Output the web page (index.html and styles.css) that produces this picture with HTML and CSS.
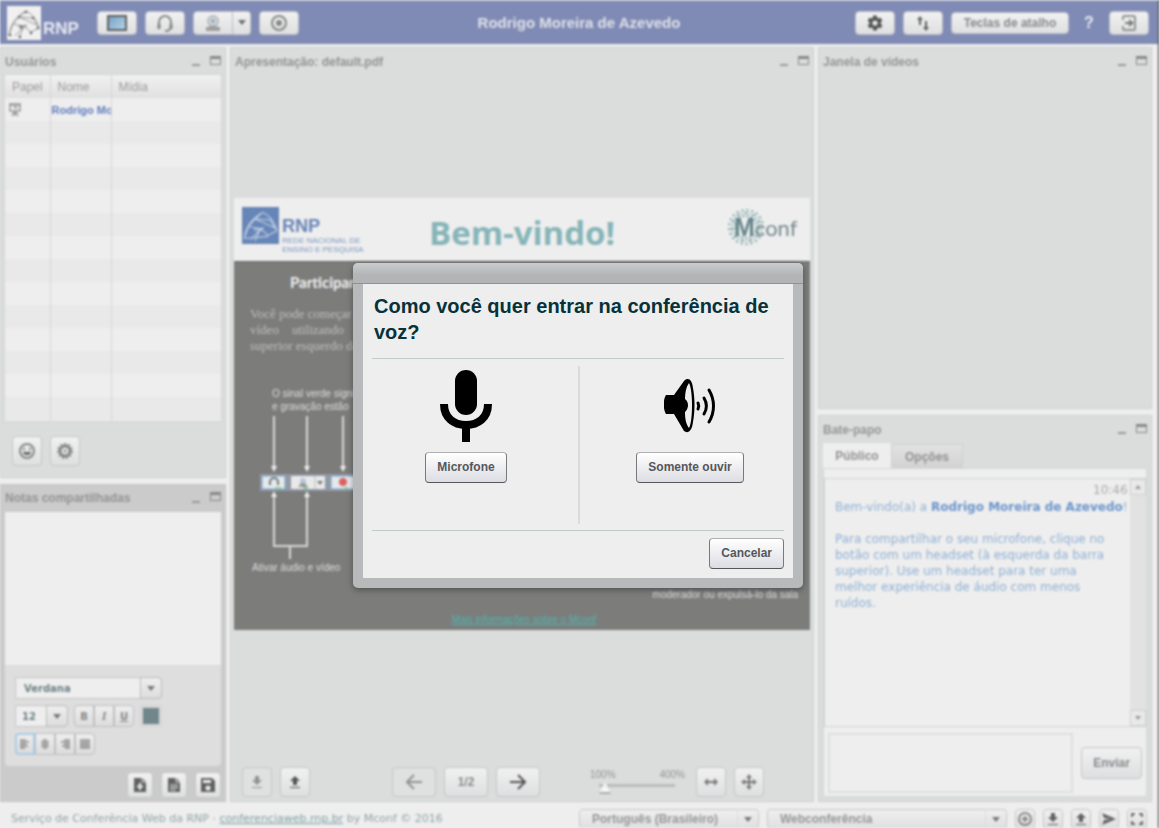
FILE: index.html
```html
<!DOCTYPE html>
<html lang="pt-BR">
<head>
<meta charset="utf-8">
<title>Webconferência</title>
<link rel="stylesheet" href="styles.css">
</head>
<body>
<div class="app">
  <header class="topbar">
    <div class="topbar-left">
      <div class="brand">
        <svg class="brand-mark" viewBox="0 0 34 34"><rect width="34" height="34" fill="#f0f0f0"/><g fill="none" stroke="#999" stroke-width="1"><path d="M2 29C3 20 8 11 19 5C26 8 31 16 32 22L24 26M2 29L6 18L17 20L24 26M6 18L12 11L19 5M12 11L26 12L32 22M12 11L30 19M17 20L8 30M17 20L12 31M14 24L20 19L11 21"/></g><g fill="#666"><circle cx="19" cy="6" r="1.3"/><circle cx="12" cy="11" r="1.2"/><circle cx="26" cy="12" r="1.2"/><circle cx="31" cy="22" r="1.3"/><circle cx="24" cy="27" r="1.3"/><circle cx="13" cy="31" r="1.3"/><circle cx="3" cy="29" r="1.3"/><circle cx="14" cy="21" r="1.3"/></g></svg>
        <span class="brand-name">RNP</span>
      </div>
      <button class="btn top-btn" aria-label="Compartilhar tela"><svg width="20" height="16" viewBox="0 0 20 16"><defs><linearGradient id="scr" x1="0" y1="0" x2="1" y2="1"><stop offset="0" stop-color="#4d86b4"/><stop offset="1" stop-color="#a9d3ef"/></linearGradient></defs><rect x="1" y="1" width="18" height="14" fill="url(#scr)" stroke="#333" stroke-width="2"/></svg></button>
      <button class="btn top-btn" aria-label="Áudio"><svg width="18" height="18" viewBox="0 0 18 18" fill="none" stroke="#666" stroke-width="2"><path d="M3 11V8a6 6 0 0 1 12 0v3M14 14c0 2-2 3-5 3"/><path d="M3 10v5M15 10v5" stroke-width="3"/></svg></button>
      <div class="split">
        <button class="btn top-btn split-main" aria-label="Câmera"><svg width="18" height="18" viewBox="0 0 18 18"><circle cx="9" cy="7" r="5" fill="#c4d3df" stroke="#aaa" stroke-width="2"/><circle cx="9" cy="7" r="2" fill="#7f93a5"/><path d="M6 12h6l2 1h2v4H2v-4h2z" fill="#888"/></svg></button>
        <button class="btn split-arrow" aria-label="Opções de câmera"><svg width="8" height="6" viewBox="0 0 8 6"><path d="M0 0h8L4 5z" fill="#444"/></svg></button>
      </div>
      <button class="btn top-btn" aria-label="Gravar"><svg width="18" height="18" viewBox="0 0 18 18"><circle cx="9" cy="9" r="7" fill="none" stroke="#666" stroke-width="2"/><circle cx="9" cy="9" r="3" fill="#666"/></svg></button>
    </div>
    <h1 class="topbar-title">Rodrigo Moreira de Azevedo</h1>
    <div class="topbar-right">
      <button class="btn top-btn" aria-label="Configurações"><svg width="18" height="18" viewBox="0 0 24 24"><path fill="#222" d="M19.4 13c0-.3.1-.6.1-1s0-.7-.1-1l2.1-1.6c.2-.2.2-.4.1-.6l-2-3.5c-.1-.2-.4-.3-.6-.2l-2.500 1c-.5-.4-1.100-.7-1.700-1l-.4-2.600c0-.3-.2-.5-.4-.5h-4c-.2 0-.4.200-.5.400l-.4 2.700c-.6.200-1.100.6-1.700 1l-2.500-1c-.2-.1-.4 0-.6.200l-2 3.500c-.1.200-.1.500.100.6L4.600 11c0 .3-.1.700-.1 1s0 .7.1 1l-2.100 1.600c-.2.2-.2.4-.1.6l2 3.500c.1.200.4.300.6.200l2.500-1c.5.400 1.100.7 1.700 1l.4 2.600c0 .3.200.5.400.5h4c.2 0 .5-.2.500-.4l.4-2.700c.6-.2 1.100-.6 1.700-1l2.500 1c.2.100.4 0 .6-.2l2-3.500c.1-.2.100-.5-.1-.6zM12 15.500a3.500 3.500 0 1 1 0-7 3.500 3.500 0 0 1 0 7z"/></svg></button>
      <button class="btn top-btn" aria-label="Rede"><svg width="16" height="18" viewBox="0 0 16 18" fill="none" stroke="#333" stroke-width="2"><path d="M5 11V3M11 7v8"/><path d="M2 6l3-4 3 4zM8 13l3 4 3-4z" fill="#333" stroke="none"/></svg></button>
      <button class="btn key-btn">Teclas de atalho</button>
      <button class="help" aria-label="Ajuda">?</button>
      <button class="btn top-btn" aria-label="Sair"><svg width="16" height="18" viewBox="0 0 16 18"><path d="M2 6V3l1-1h10l1 1v12l-1 1H3l-1-1v-3" fill="none" stroke="#777" stroke-width="2"/><path d="M4 8h4V5l5 4-5 4v-3H4z" fill="#555"/></svg></button>
    </div>
  </header>

  <main class="workspace">
    <div class="column">
      <section class="panel users">
        <div class="panel-head"><h2>Usuários</h2><button class="win min" aria-label="Minimizar"></button><button class="win max" aria-label="Maximizar"></button></div>
        <div class="users-grid">
          <table>
            <thead><tr><th class="c-role">Papel</th><th class="c-name">Nome</th><th>Mídia</th></tr></thead>
            <tbody>
              <tr class="user-row"><td><svg width="14" height="14" viewBox="0 0 14 14" fill="none" stroke="#999" stroke-width="1.500"><rect x="2" y="2" width="10" height="6"/><path d="M1 1h12M7 8v5M4 13l2-4M10 13L8 9M6 4h2v2"/></svg></td><td class="user-name">Rodrigo Mo</td><td></td></tr>
              <tr><td></td><td></td><td></td></tr>
            </tbody>
          </table>
        </div>
        <div class="users-actions">
          <button class="btn tool" aria-label="Status"><svg width="18" height="18" viewBox="0 0 18 18"><circle cx="9" cy="9" r="7" fill="none" stroke="#666" stroke-width="2"/><circle cx="6" cy="7" r="1.200" fill="#666"/><circle cx="12" cy="7" r="1.200" fill="#666"/><path d="M5 10h8c0 4-8 4-8 0z" fill="#333"/></svg></button>
          <button class="btn tool" aria-label="Opções"><svg width="18" height="18" viewBox="0 0 18 18" fill="none" stroke="#666"><circle cx="9" cy="9" r="5" stroke-width="3"/><circle cx="9" cy="9" r="7" stroke-width="2" stroke-dasharray="2 2"/><circle cx="9" cy="9" r="1" fill="#555"/></svg></button>
        </div>
      </section>

      <section class="panel notes">
        <div class="panel-head"><h2>Notas compartilhadas</h2><button class="win min" aria-label="Minimizar"></button><button class="win max" aria-label="Maximizar"></button></div>
        <textarea class="notes-text" aria-label="Notas compartilhadas"></textarea>
        <div class="notes-format">
          <div class="format-row">
            <div class="combo font-combo"><select aria-label="Fonte"><option>Verdana</option></select><span class="combo-arrow"></span></div>
          </div>
          <div class="format-row">
            <div class="combo size-combo"><select aria-label="Tamanho"><option>12</option></select><span class="combo-arrow"></span></div>
            <div class="seg"><button class="bold">B</button><button class="ital">I</button><button class="under">U</button></div>
            <button class="swatch" aria-label="Cor"></button>
          </div>
          <div class="format-row">
            <div class="seg aligns">
              <button class="active" aria-label="Esquerda"><svg width="10" height="10" viewBox="0 0 10 10" stroke="#666"><path d="M0 1h6M0 3h9M0 5h6M0 7h8M0 9h5"/></svg></button>
              <button aria-label="Centro"><svg width="10" height="10" viewBox="0 0 10 10" stroke="#666"><path d="M3 1h4M1 3h8M2 5h6M1 7h8M3 9h4"/></svg></button>
              <button aria-label="Direita"><svg width="10" height="10" viewBox="0 0 10 10" stroke="#666"><path d="M4 1h6M1 3h9M4 5h6M2 7h8M5 9h5"/></svg></button>
              <button aria-label="Justificar"><svg width="10" height="10" viewBox="0 0 10 10" stroke="#666"><path d="M0 1h10M0 3h10M0 5h10M0 7h10M0 9h10"/></svg></button>
            </div>
          </div>
        </div>
        <div class="notes-actions">
          <button class="btn tool small" aria-label="Nova nota"><svg width="16" height="16" viewBox="0 0 16 16"><path d="M2 1h8l4 4v10H2z" fill="#333"/><path d="M8 6v7M5 9.500h6" stroke="#eee" stroke-width="2"/><path d="M10 1v4h4" stroke="#ddd" fill="none"/></svg></button>
          <button class="btn tool small" aria-label="Texto"><svg width="16" height="16" viewBox="0 0 16 16"><path d="M2 1h8l4 4v10H2z" fill="#333"/><path d="M4 8h8M4 10.500h8M4 13h6" stroke="#eee"/><path d="M10 1v4h4" stroke="#ddd" fill="none"/></svg></button>
          <button class="btn tool small" aria-label="Salvar"><svg width="16" height="16" viewBox="0 0 16 16"><path d="M1 1h11l3 3v11H1z" fill="#333"/><path d="M3 3h8v3H3z" fill="#eee"/><circle cx="8" cy="11" r="2.500" fill="#eee"/></svg></button>
        </div>
      </section>
    </div>

    <section class="panel presentation">
      <div class="panel-head"><h2>Apresentação: default.pdf</h2><button class="win min" aria-label="Minimizar"></button><button class="win max" aria-label="Maximizar"></button></div>
      <div class="stage">
        <div class="slide">
          <div class="slide-head">
            <div class="slide-rnp">
              <svg width="37" height="37" viewBox="0 0 34 34"><rect width="34" height="34" fill="#6786b8"/><path fill="none" stroke="#c3d0e4" d="M2 29C3 20 8 11 19 5C26 8 31 16 32 22L24 26M2 29L6 18L17 20L24 26M6 18L12 11L19 5M12 11L26 12L32 22M12 11L30 19M17 20L8 30M17 20L12 31M14 24L20 19L11 21M2 29L24 27"/></svg>
              <div class="rnp-text"><b>RNP</b><span>REDE NACIONAL DE</span><span>ENSINO E PESQUISA</span></div>
            </div>
            <div class="slide-title">Bem-vindo!</div>
            <div class="mconf">
              <svg class="mconf-dots" width="38" height="38" viewBox="0 0 38 38" fill="none" stroke="#7fa5a8"><circle cx="19" cy="19" r="17" stroke-width="2" stroke-dasharray="2 3"/><circle cx="19" cy="19" r="14" stroke-width="2" stroke-dasharray="3 2 1 2"/><circle cx="19" cy="19" r="11" stroke-width="2" stroke-dasharray="2 2"/></svg>
              <span class="mconf-name"><b>M</b>conf</span>
            </div>
          </div>
          <div class="board">
            <div class="board-title">Participando</div>
            <p class="board-intro">Você pode começar<br>vídeo &nbsp; &nbsp;utilizando<br>superior esquerdo da</p>
            <p class="board-note">O sinal verde signi<br>e gravação estão</p>
            <svg class="board-diagram" width="120" height="148" viewBox="0 0 120 148">
              <g stroke="#d8d8d8" stroke-width="2" fill="none"><path d="M14 3V56M47 3V56M83 3V56M14 82V133H47V82M30 133V146"/></g>
              <g fill="#eee"><path d="M11 53h6l-3 6zM44 53h6l-3 6zM80 53h6l-3 6zM11 84h6l-3-6zM44 84h6l-3-6z"/></g>
              <rect x="0" y="61" width="120" height="17" fill="#929aa6"/>
              <rect x="2" y="63" width="23" height="13" fill="#e6e9ec" stroke="#78a6c8"/><rect x="31" y="63" width="34" height="13" rx="1" fill="#e9e9e9"/><rect x="71" y="63" width="30" height="13" fill="#e6e9ec" stroke="#78a6c8"/>
              <path d="M55 63v13" stroke="#bbb"/><path d="M57 68h6l-3 4z" fill="#777"/>
              <path d="M10 72v-3a4 4 0 0 1 8 0v3" fill="none" stroke="#777" stroke-width="2"/><path d="M15 75h6M43 75h5M84 75h4" stroke="#8fd099" stroke-width="2"/><circle cx="43" cy="68" r="3" fill="#b8c8d8"/><path d="M38 74l3-4h4l3 4z" fill="#999"/><circle cx="83" cy="69" r="4" fill="#dd6060"/>
            </svg>
            <div class="board-caption">Ativar áudio e vídeo</div>
            <div class="board-right">moderador ou expulsá-lo da sala</div>
            <a class="board-link" href="#mconf">Mais informações sobre o Mconf</a>
          </div>
        </div>
      </div>
      <div class="pres-tools">
        <div class="group">
          <button class="btn tool" disabled aria-label="Baixar"><svg width="14" height="14" viewBox="0 0 14 14" fill="#333"><path d="M5 1h4v4h3l-5 5-5-5h3zM2 12h10v1H2z"/></svg></button>
          <button class="btn tool" aria-label="Enviar arquivo"><svg width="14" height="14" viewBox="0 0 14 14" fill="#222"><path d="M5 10h4V6h3L7 1 2 6h3zM2 12h10v1H2z"/></svg></button>
        </div>
        <div class="group pager">
          <button class="btn tool wide" disabled aria-label="Anterior"><svg width="18" height="16" viewBox="0 0 18 16" fill="none" stroke="#333" stroke-width="2"><path d="M17 8H3M9 1L2 8l7 7"/></svg></button>
          <button class="btn tool wide">1/2</button>
          <button class="btn tool wide" aria-label="Próximo"><svg width="18" height="16" viewBox="0 0 18 16" fill="none" stroke="#222" stroke-width="2"><path d="M1 8h14M9 1l7 7-7 7"/></svg></button>
        </div>
        <div class="group zoomer">
          <div class="zoom"><div class="zoom-labels"><span>100%</span><span>400%</span></div><input type="range" min="100" max="400" value="100" aria-label="Zoom"></div>
          <button class="btn tool" aria-label="Ajustar largura"><svg width="16" height="10" viewBox="0 0 16 10" fill="#555"><path d="M1 5l4-4v3h6V1l4 4-4 4V6H5v3z"/></svg></button>
          <button class="btn tool" aria-label="Ajustar página"><svg width="16" height="16" viewBox="0 0 16 16" fill="#555"><path d="M8 0l3 4H9v3h3V5l4 3-4 3V9H9v3h2l-3 4-3-4h2V9H4v2L0 8l4-3v2h3V4H5z"/></svg></button>
        </div>
      </div>
    </section>

    <div class="column">
      <section class="panel videos">
        <div class="panel-head"><h2>Janela de vídeos</h2><button class="win min" aria-label="Minimizar"></button><button class="win max" aria-label="Maximizar"></button></div>
      </section>
      <section class="panel chat">
        <div class="panel-head"><h2>Bate-papo</h2><button class="win min" aria-label="Minimizar"></button><button class="win max" aria-label="Maximizar"></button></div>
        <div class="tabs"><button class="tab current">Público</button><button class="tab">Opções</button></div>
        <div class="chat-body">
          <div class="chat-log">
            <div class="chat-text">
              <time>10:46</time>
              <p class="greeting">Bem-vindo(a) a <b>Rodrigo Moreira de Azevedo</b>!</p>
              <p>Para compartilhar o seu microfone, clique no botão com um headset (à esquerda da barra superior). Use um headset para ter uma<br>melhor experiência de áudio com menos<br>ruídos.</p>
            </div>
            <div class="scroll"><button aria-label="Subir"><svg width="6" height="4" viewBox="0 0 6 4"><path d="M0 4h6L3 0z" fill="#999"/></svg></button><button aria-label="Descer"><svg width="6" height="4" viewBox="0 0 6 4"><path d="M0 0h6L3 4z" fill="#999"/></svg></button></div>
          </div>
          <div class="chat-send"><textarea aria-label="Mensagem"></textarea><button class="btn send">Enviar</button></div>
        </div>
      </section>
    </div>
  </main>

  <footer class="footer">
    <p>Serviço de Conferência Web da RNP · <a href="#conferenciaweb">conferenciaweb.rnp.br</a> by Mconf © 2016</p>
    <div class="foot-select lang"><select aria-label="Idioma"><option>Português (Brasileiro)</option></select><span class="foot-arrow"></span></div>
    <div class="foot-select layout"><select aria-label="Leiaute"><option>Webconferência</option></select><span class="foot-arrow"></span></div>
    <button class="btn foot-btn" aria-label="Adicionar leiaute"><svg width="16" height="16" viewBox="0 0 16 16" fill="none" stroke="#666"><circle cx="8" cy="8" r="6" stroke-width="2"/><path d="M8 5v6M5 8h6" stroke-width="2"/></svg></button>
    <button class="btn foot-btn" aria-label="Baixar leiaute"><svg width="14" height="14" viewBox="0 0 14 14" fill="#333"><path d="M5 1h4v4h3l-5 5-5-5h3zM2 12h10v1H2z"/></svg></button>
    <button class="btn foot-btn" aria-label="Enviar leiaute"><svg width="14" height="14" viewBox="0 0 14 14" fill="#333"><path d="M5 10h4V6h3L7 1 2 6h3zM2 12h10v1H2z"/></svg></button>
    <button class="btn foot-btn" aria-label="Difundir leiaute"><svg width="14" height="12" viewBox="0 0 14 12" fill="#333"><path d="M0 0l14 6-14 6 2-5 7-1-7-1z"/></svg></button>
    <button class="btn foot-btn" aria-label="Tela cheia"><svg width="12" height="12" viewBox="0 0 12 12" fill="none" stroke="#444" stroke-width="2"><path d="M1 4V1h3M8 1h3v3M11 8v3H8M4 11H1V8"/></svg></button>
  </footer>
</div>

<div class="overlay">
  <div class="dialog" role="dialog" aria-labelledby="dlg-title">
    <div class="dialog-bar"></div>
    <div class="dialog-body">
      <h2 id="dlg-title">Como você quer entrar na conferência de voz?</h2>
      <div class="choices">
        <div class="choice">
          <svg width="52" height="72" viewBox="0 0 52 72"><rect x="15" y="0" width="22" height="45" rx="11"/><path d="M4 34c0 14 10 21 22 21s22-7 22-21" fill="none" stroke="#000" stroke-width="8"/><path d="M22 58h8v14h-8z"/></svg>
          <button class="dlg-btn">Microfone</button>
        </div>
        <div class="choice">
          <svg width="52" height="72" viewBox="0 0 52 72"><path d="M2 25h8L20 11c4-4 8-2 9 7 2 11 2 23 0 34-1 9-5 12-9 9L10 44H2c-3-5-3-14 0-19z"/><path d="M25 13c-3 4-4 10-4 16 4 3 4 9 0 13 0 7 1 12 4 16 4-7 4-38 0-45z" fill="#eee"/><g fill="none" stroke="#000" stroke-width="3" stroke-linecap="round"><path d="M34 33c1 2 1 4 0 6M40 28c3 5 3 11 0 16M45 20c6 10 6 22 0 32"/></g></svg>
          <button class="dlg-btn">Somente ouvir</button>
        </div>
      </div>
      <div class="dialog-foot"><button class="dlg-btn">Cancelar</button></div>
    </div>
  </div>
</div>
</body>
</html>
```
FILE: styles.css
```css
* { box-sizing: border-box; }
body {
  margin: 0;
  background: #eee;
  font: 12px "Liberation Sans", Arial, sans-serif;
  color: #8a8c8b;
}
h1, h2, p { margin: 0; }
button, select, textarea, input { font: inherit; color: inherit; margin: 0; }
button { padding: 0; border: 0; background: none; }
svg { display: block; flex: none; }

.app {
  height: 100vh;
  min-height: 600px;
  display: flex;
  flex-direction: column;
  overflow: hidden;
  border-right: 1px solid #333;
  filter: blur(1px);
}

.btn {
  display: flex;
  align-items: center;
  justify-content: center;
  background: linear-gradient(#f1f1f1, #dedfe0);
  border: 1px solid #c4c5c6;
  border-radius: 4px;
  font-weight: bold;
  color: #88898b;
}
.btn svg { opacity: .75; }
.btn:disabled { background: #dfe0e0; }
.btn:disabled svg { opacity: .45; }

/* top bar */
.topbar {
  flex: none;
  height: 44px;
  display: grid;
  grid-template-columns: 1fr auto 1fr;
  align-items: center;
  background: #808bb5;
  border-top: 1px solid #b4bacf;
}
.topbar-left, .topbar-right { display: flex; align-items: center; gap: 8px; }
.topbar-left { padding-left: 7px; }
.topbar-right { justify-content: flex-end; padding-right: 9px; }
.brand { display: flex; align-items: flex-end; width: 82px; gap: 2px; }
.brand-mark { width: 34px; height: 34px; }
.brand-name { font-weight: bold; font-size: 17px; line-height: 22px; color: #e6e8f0; }
.topbar-title { font-size: 15px; color: #dfe1ea; }
.top-btn { width: 40px; height: 24px; border-color: #b9bcc8; }
.split { display: flex; }
.split-main { border-radius: 4px 0 0 4px; }
.split-arrow { width: 18px; border-left: 0; border-radius: 0 4px 4px 0; }
.key-btn { width: 118px; height: 22px; border-color: #b9bcc8; }
.help { width: 24px; font-weight: bold; font-size: 16px; color: #e8eaf2; }

/* windows */
.workspace {
  flex: 1;
  min-height: 0;
  display: grid;
  grid-template-columns: 226px 1fr 334px;
  gap: 4px;
  padding: 3px 6px 0 0;
}
.column { display: flex; flex-direction: column; gap: 6px; min-height: 0; }
.panel {
  display: flex;
  flex-direction: column;
  min-height: 0;
  min-width: 0;
  background: #dbdddc;
  border: 1px solid #cdd1d0;
  padding: 0 4px 4px;
}
.panel-head { flex: none; display: flex; height: 27px; align-items: center; }
.panel-head h2 { flex: 1; font-size: 12px; color: #949695; }
.win { width: 11px; height: 9px; }
.min { border-bottom: 2px solid #999; margin-right: 10px; width: 8px; }
.max { border: 1px solid #888; border-top-width: 3px; margin-bottom: 3px; }

.users { flex: 431 1 0; }
.users-grid {
  flex: 1;
  min-height: 0;
  background: repeating-linear-gradient(#e9e9e9 0 23px, #eee 23px 46px);
  outline: 1px solid #d3d5d4;
}
.users table { width: 100%; height: 100%; table-layout: fixed; border-collapse: collapse; }
.users th {
  height: 23px;
  padding: 0 7px;
  text-align: left;
  font-weight: normal;
  color: #9b9b9b;
  background: linear-gradient(#f0f0f0, #e0e0e0);
}
.users th, .users td { border-right: 1px solid #d6d6d6; }
.users th:last-child, .users td:last-child { border-right: 0; }
.c-role { width: 45px; }
.c-name { width: 61px; }
.user-row td { height: 24px; padding: 0 3px; }
.user-row .user-name {
  padding: 0 1px;
  font-weight: bold;
  font-size: 11px;
  color: #5f7cbd;
  white-space: nowrap;
  overflow: hidden;
}
.users-actions { display: flex; gap: 8px; padding: 15px 7px 7px; }
.tool { width: 30px; height: 30px; }
.small { width: 26px; height: 26px; }

.notes { flex: 318 1 0; background: #cbcbcb; border-color: #c5c5c5; padding-bottom: 3px; }
.notes-text { flex: 1; min-height: 0; resize: none; border: 0; background: #eee; }
.notes-format {
  display: grid;
  gap: 6px;
  padding: 12px 10px 11px;
  background: #dedede;
  border-radius: 0 0 4px 4px;
}
.format-row { display: flex; gap: 6px; height: 22px; }
.combo { position: relative; display: flex; }
.combo select {
  appearance: none;
  width: 100%;
  border: 1px solid #c4c4c4;
  border-radius: 0 4px 4px 0;
  background: #eee;
  padding: 0 8px;
  font: bold 10px "DejaVu Sans", sans-serif;
  color: #6b8084;
}
.font-combo { width: 147px; }
.size-combo { width: 53px; }
.size-combo select { padding: 0 6px; }
.combo-arrow {
  position: absolute;
  right: 0;
  top: 0;
  width: 22px;
  height: 22px;
  pointer-events: none;
  border: 1px solid #bbb;
  border-radius: 0 4px 4px 0;
  background: linear-gradient(#eee, #ddd);
}
.combo-arrow::after, .foot-arrow::after {
  content: "";
  position: absolute;
  left: 6px;
  top: 8px;
  border: 4px solid transparent;
  border-top: 5px solid #777;
  border-bottom: 0;
}
.seg { display: flex; }
.seg button {
  width: 20px;
  display: grid;
  place-items: center;
  border: 1px solid #bfbfbf;
  background: linear-gradient(#eee, #dcdcdc);
  font: bold 10px "DejaVu Sans", sans-serif;
  color: #888;
}
.seg button:first-child { border-radius: 4px 0 0 4px; }
.seg button:last-child { border-radius: 0 4px 4px 0; }
.seg .active { border: 2px solid #a9cbe2; }
.seg .ital { font-family: "Liberation Serif", serif; font-style: italic; font-size: 12px; }
.seg .under { text-decoration: underline; }
.swatch { width: 22px; border: 3px solid #d6d6d6; background: #71868b; }
.notes-actions { display: flex; justify-content: flex-end; gap: 8px; padding: 6px 0 0; }

/* presentation */
.stage { flex: 1; min-height: 0; display: grid; align-items: center; overflow: hidden; margin: 0 -1px; }
.slide {
  width: 100%;
  aspect-ratio: 4 / 3;
  display: flex;
  flex-direction: column;
  background: #eee;
  overflow: hidden;
}
.slide-head {
  flex: none;
  height: 63px;
  display: grid;
  grid-template-columns: 1fr auto 1fr;
  align-items: center;
  padding: 0 10px 0 8px;
}
.slide-rnp { display: flex; gap: 3px; margin-top: -8px; }
.rnp-text {
  display: grid;
  align-content: end;
  margin-bottom: -10px;
  font-size: 8px;
  line-height: 9px;
  color: #8198c4;
  white-space: nowrap;
}
.rnp-text b { font-size: 18px; line-height: 20px; color: #6a86b8; }
.slide-title { font: bold 33px/40px "Open Sans", sans-serif; color: #86b5b8; padding: 8px 0 0 2px; }
.mconf { position: relative; justify-self: end; width: 73px; height: 42px; }
.mconf-dots { position: absolute; left: 0; top: 0; }
.mconf-name {
  position: absolute;
  left: 7px;
  top: 5px;
  font: 22px/28px "Lato", sans-serif;
  color: #75898d;
}
.mconf-name b { font: bold 25px/28px "Liberation Sans", sans-serif; color: #64858a; }
.board {
  flex: 1;
  display: flex;
  flex-direction: column;
  align-items: flex-start;
  background: #7c7c7b;
  border-top: 1px solid #666;
  color: #dadada;
  padding: 10px 12px 4px 16px;
}
.board-title { padding-left: 40px; font: bold 15px/20px "Lato", sans-serif; color: #f2f2f2; }
.board-intro { margin-top: 14px; font: 13px/16px "Liberation Serif", serif; color: #bcbcbc; }
.board-note { margin: 33px 0 0 22px; font-size: 10px; line-height: 13px; }
.board-diagram { margin-left: 10px; }
.board-caption { padding-left: 2px; font-size: 10px; line-height: 14px; }
.board-right { align-self: flex-end; margin-top: 13px; font-size: 10px; line-height: 14px; }
.board-link { align-self: center; margin-top: 11px; font-size: 10px; line-height: 14px; color: #4fb5ae; }
.pres-tools { display: flex; align-items: flex-end; height: 45px; padding-left: 7px; }
.group { display: flex; align-items: center; gap: 8px; }
.pager { margin-left: 82px; }
.zoomer { margin-left: 50px; }
.wide { width: 44px; }
.zoom { width: 95px; margin-right: 3px; font-size: 10px; line-height: 12px; color: #939393; }
.zoom-labels { display: flex; justify-content: space-between; }
.zoom input {
  display: block;
  appearance: none;
  width: 76px;
  height: 14px;
  margin-left: 9px;
  background: linear-gradient(#bbb, #bbb) 0 3px / 100% 3px no-repeat;
}
.zoom input::-webkit-slider-thumb {
  appearance: none;
  width: 12px;
  height: 12px;
  background: #f6f6f6;
  border-bottom: 2px solid #aaa;
  clip-path: polygon(50% 0, 100% 100%, 0 100%);
}

/* right column */
.videos { flex: 362 1 0; }
.chat { flex: 387 1 0; }
.tabs { display: flex; align-items: flex-end; height: 25px; }
.tab {
  width: 72px;
  height: 24px;
  border: 1px solid #cfcfcf;
  border-bottom: 0;
  background: linear-gradient(#e2e2e2, #d2d2d4);
  font-weight: bold;
  color: #909192;
}
.current { width: 68px; height: 25px; background: #eee; border-color: #eee; }
.chat-body { flex: 1; min-height: 0; display: flex; flex-direction: column; background: #eee; padding-top: 9px; border: 1px solid #d3d6d5; }
.chat-log { flex: 1; min-height: 0; display: flex; border: 1px solid #cfd2d1; }
.chat-text { flex: 1; padding: 0 2px 0 10px; font: 12px/16px "DejaVu Sans", sans-serif; color: #8fb0d4; }
.chat-text time { display: block; text-align: right; padding-top: 2px; line-height: 18px; color: #aaa; }
.chat-text .greeting { margin-bottom: 16px; white-space: nowrap; }
.chat-text b { color: #6a94cb; }
.scroll { width: 16px; flex: none; display: flex; flex-direction: column; justify-content: space-between; background: #e2e2e2; }
.scroll button { height: 16px; display: grid; place-items: center; border: 1px solid #d0d0d0; background: #e9e9e9; }
.chat-send { display: flex; align-items: center; gap: 8px; padding: 6px 4px 3px; }
.chat-send textarea { flex: 1; height: 60px; resize: none; background: #eee; border: 2px solid #dedede; }
.send { width: 61px; height: 32px; }

/* footer */
.footer { flex: none; height: 26px; display: flex; align-items: flex-start; gap: 8px; padding: 7px 11px 0; }
.footer p { flex: 1; font: 11px/20px "DejaVu Sans", sans-serif; color: #92a3a5; white-space: nowrap; }
.footer a { color: #7d9fa2; }
.foot-select { position: relative; }
.foot-select select {
  appearance: none;
  width: 100%;
  height: 20px;
  padding: 0 12px;
  background: linear-gradient(#efefef, #dfe0e1);
  border: 1px solid #c8c8c8;
  border-radius: 4px;
  font-weight: bold;
  color: #949596;
}
.lang { width: 180px; }
.layout { width: 240px; }
.foot-arrow { position: absolute; right: 0; top: 0; width: 22px; height: 20px; border-left: 1px solid #ddd; pointer-events: none; }
.foot-btn { width: 20px; height: 20px; }

/* dialog */
.overlay { position: fixed; inset: 0; display: grid; place-items: center; padding: 23px 3px 0 0; }
.dialog {
  width: 450px;
  max-width: 100%;
  background: #b8b9bb;
  border-radius: 5px;
  padding: 0 10px 10px;
  box-shadow: 0 2px 6px rgba(0, 0, 0, .35);
}
.dialog-bar {
  height: 21px;
  margin: 0 -10px;
  border-radius: 5px 5px 0 0;
  background: linear-gradient(#cbcccd, #b3b4b6 60%);
  border-bottom: 1px solid #8f9193;
}
.dialog-body { background: #eee; padding: 9px; }
.dialog h2 { font-size: 20px; line-height: 26px; color: #06323b; padding: 0 2px 13px; }
.choices {
  display: grid;
  grid-template-columns: 1fr 1fr;
  border: solid #c3cbca;
  border-width: 1px 0;
  padding: 7px 0 6px;
}
.choice { display: flex; flex-direction: column; align-items: center; gap: 10px; height: 158px; padding: 4px 18px 0 0; }
.choice + .choice { border-left: 2px solid #d8dddc; padding: 4px 0 0 16px; }
.dialog-foot { display: flex; justify-content: flex-end; padding-top: 7px; }
.dlg-btn {
  height: 31px;
  padding: 0 11px 1px;
  border: 1px solid #77797c;
  border-top-color: #aeb0b2;
  border-bottom-color: #55575a;
  border-radius: 4px;
  background: linear-gradient(#fff, #dcdde3);
  font-weight: bold;
  color: #55575b;
}
```
